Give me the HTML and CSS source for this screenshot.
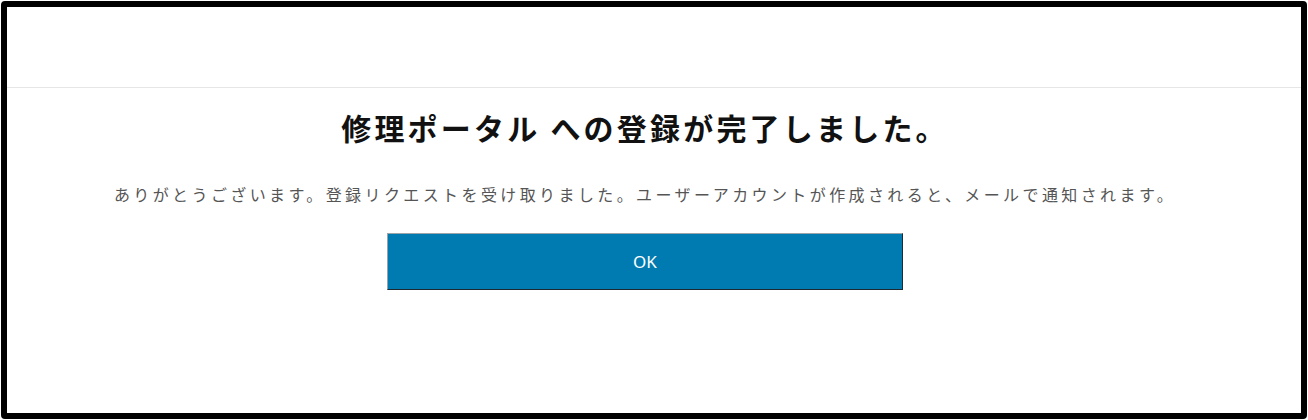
FILE: index.html
```html
<!DOCTYPE html>
<html lang="ja">
<head>
<meta charset="utf-8">
<title>登録完了</title>
<link rel="stylesheet" href="styles.css">
</head>
<body>
<div class="frame">
  <header class="topbar"></header>
  <main class="content">
    <h1 class="title">修理ポータル への登録が完了しました。</h1>
    <p class="message">ありがとうございます。登録リクエストを受け取りました。ユーザーアカウントが作成されると、メールで通知されます。</p>
    <button class="ok-button" type="button">OK</button>
  </main>
</div>
</body>
</html>
```
FILE: styles.css
```css
html, body {
  margin: 0;
  padding: 0;
  background: #ffffff;
}
body {
  width: 1308px;
  height: 420px;
  box-sizing: border-box;
  padding: 1px;
  font-family: "Noto Sans CJK JP", "Noto Sans", sans-serif;
}
.frame {
  box-sizing: border-box;
  width: 1306px;
  height: 418px;
  border: 6px solid #000000;
  border-radius: 4px;
  background: #ffffff;
  display: flex;
  flex-direction: column;
}
.topbar {
  height: 80px;
  border-bottom: 1px solid #e6e6e6;
  flex: none;
}
.content {
  display: flex;
  flex-direction: column;
  align-items: center;
  padding-right: 18px;
}
.title {
  margin: 17px 0 0;
  font-size: 30px;
  line-height: 44px;
  font-weight: 700;
  color: #111111;
  letter-spacing: 3.2px;
}
.message {
  margin: 33px 0 0;
  font-size: 16px;
  line-height: 24px;
  font-weight: 400;
  color: #555555;
  letter-spacing: 3.4px;
}
.ok-button {
  margin-top: 27px;
  width: 516px;
  height: 57px;
  background: #007bb1;
  color: #ffffff;
  font-family: "Noto Sans", "Noto Sans CJK JP", sans-serif;
  font-size: 17px;
  border-style: solid;
  border-width: 1px;
  border-color: #9aa4a8 #1f2a30 #1f2a30 #9aa4a8;
  padding: 0;
}
```
